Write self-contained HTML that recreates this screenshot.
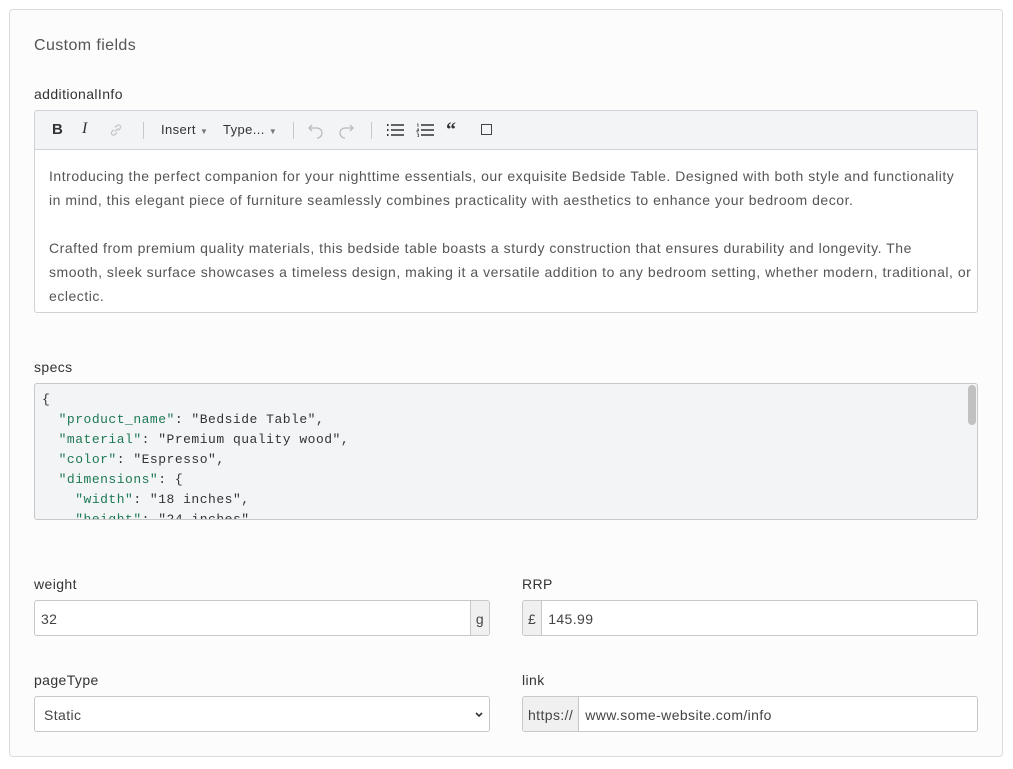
<!DOCTYPE html>
<html><head><meta charset="utf-8"><style>
*{box-sizing:border-box;margin:0;padding:0}
body{width:1013px;height:769px;background:#fff;font-family:"Liberation Sans",sans-serif;color:#333;position:relative;overflow:hidden;letter-spacing:0.4px}
.card{position:absolute;left:9px;top:9px;width:994px;height:748px;border:1px solid #dcdcdc;border-radius:4px;background:#fcfcfc}
.abs{position:absolute}
.h{left:34px;top:37px;font-size:16px;color:#555}
.lbl{font-size:14px;color:#333}
.ed{left:34px;top:110px;width:944px;height:203px;border:1px solid #cfd2d6;border-radius:3px;background:#fff;overflow:hidden}
.tb{height:39px;background:#f3f4f6;border-bottom:1px solid #cfd2d6;position:relative;font-size:13px;color:#333}
.tb span{position:absolute;top:11px}
.sep{position:absolute;top:11px;width:1px;height:17px;background:#c8c8c8}
.txt{padding:14px 0 0 14px;font-size:14px;line-height:24px;color:#555;letter-spacing:0.53px;white-space:nowrap}
.code{left:34px;top:383px;width:944px;height:137px;border:1px solid #c8c8c8;border-radius:3px;background:#f3f4f6;font-family:"Liberation Mono",monospace;font-size:13px;letter-spacing:0.5px;line-height:20px;color:#333;padding:6px 7px;white-space:pre;overflow:hidden}
.k{color:#1e7a55}
.inp{height:36px;border:1px solid #c8c8c8;border-radius:3px;background:#fff;font-size:14px;color:#444;display:flex;overflow:hidden}
.inp .v{padding:1px 6px 0;line-height:34px;flex:1}
.add{background:#f0f0f0;line-height:34px;padding:1px 5px 0;color:#444}
</style></head><body>
<div class="card"></div>
<div class="abs h">Custom fields</div>
<div class="abs lbl" style="left:34px;top:86px">additionalInfo</div>
<div class="abs ed">
 <div class="tb">
  <span style="left:17px;font-weight:bold;font-size:15px;top:10px">B</span>
  <span style="left:47px;font-style:italic;font-family:'Liberation Serif',serif;font-size:16px;top:9px">I</span>
  <span style="left:73px;top:11px"><svg width="16" height="16" viewBox="0 0 16 16" fill="none" stroke="#c8c8c8" stroke-width="1.3"><path d="M7 9.5l3-3M6 7.5l-2 2a2 2 0 003 3l2-2M10 8.5l2-2a2 2 0 00-3-3l-2 2"/></svg></span>
  <div class="sep" style="left:108px"></div>
  <span style="left:126px">Insert <small style="font-size:8px;color:#777">▼</small></span>
  <span style="left:188px">Type... <small style="font-size:8px;color:#777">▼</small></span>
  <div class="sep" style="left:258px"></div>
  <span style="left:272px;top:10px"><svg width="18" height="18" viewBox="0 0 18 18" fill="none" stroke="#bbb" stroke-width="1.3"><path d="M5 4L2 7l3 3M2 7h8a5 5 0 010 10"/></svg></span>
  <span style="left:302px;top:10px"><svg width="18" height="18" viewBox="0 0 18 18" fill="none" stroke="#bbb" stroke-width="1.3"><path d="M13 4l3 3-3 3M16 7H8a5 5 0 000 10"/></svg></span>
  <div class="sep" style="left:336px"></div>
  <span style="left:351px;top:12px"><svg width="18" height="14" viewBox="0 0 18 14" stroke="#333" stroke-width="1.4"><path d="M5 2h13M5 7h13M5 12h13"/><path d="M1 2h1.5M1 7h1.5M1 12h1.5" stroke-width="2"/></svg></span>
  <span style="left:381px;top:12px"><svg width="18" height="14" viewBox="0 0 18 14" stroke="#333" stroke-width="1.4"><path d="M5 2h13M5 7h13M5 12h13"/><path d="M1 1h1v3M1 6h1.5v1.5h-1.5v1.5h1.5M1 11h1.5v3h-1.5" stroke-width=".7" fill="none"/></svg></span>
  <span style="left:411px;top:8px;font-weight:bold;font-size:20px;font-family:'Liberation Serif',serif">&#8220;</span>
  <span style="left:446px;top:13px;width:11px;height:11px;border:1.3px solid #444"></span>
 </div>
 <div class="txt">Introducing the perfect companion for your nighttime essentials, our exquisite Bedside Table. Designed with both style and functionality<br>in mind, this elegant piece of furniture seamlessly combines practicality with aesthetics to enhance your bedroom decor.<br><br>Crafted from premium quality materials, this bedside table boasts a sturdy construction that ensures durability and longevity. The<br>smooth, sleek surface showcases a timeless design, making it a versatile addition to any bedroom setting, whether modern, traditional, or<br>eclectic.</div>
</div>
<div class="abs lbl" style="left:34px;top:359px">specs</div>
<div class="abs code">{
  <span class="k">"product_name"</span>: "Bedside Table",
  <span class="k">"material"</span>: "Premium quality wood",
  <span class="k">"color"</span>: "Espresso",
  <span class="k">"dimensions"</span>: {
    <span class="k">"width"</span>: "18 inches",
    <span class="k">"height"</span>: "24 inches",<div style="position:absolute;right:1px;top:1px;width:8px;height:40px;background:#c1c1c1;border-radius:4px"></div></div>
<div class="abs lbl" style="left:34px;top:576px">weight</div>
<div class="abs inp" style="left:34px;top:600px;width:456px"><div class="v">32</div><div class="add" style="border-left:1px solid #c8c8c8">g</div></div>
<div class="abs lbl" style="left:522px;top:576px">RRP</div>
<div class="abs inp" style="left:522px;top:600px;width:456px"><div class="add" style="border-right:1px solid #c8c8c8">£</div><div class="v">145.99</div></div>
<div class="abs lbl" style="left:34px;top:672px">pageType</div>
<div class="abs inp" style="left:34px;top:696px;width:456px"><div class="v" style="padding-left:9px">Static</div><div style="padding:0 5px;line-height:34px"><svg width="10" height="8" viewBox="0 0 10 8"><path d="M2 2l3 3 3-3" stroke="#333" stroke-width="1.6" fill="none"/></svg></div></div>
<div class="abs lbl" style="left:522px;top:672px">link</div>
<div class="abs inp" style="left:522px;top:696px;width:456px"><div class="add" style="border-right:1px solid #c8c8c8">https://</div><div class="v">www.some-website.com/info</div></div>
</body></html>
